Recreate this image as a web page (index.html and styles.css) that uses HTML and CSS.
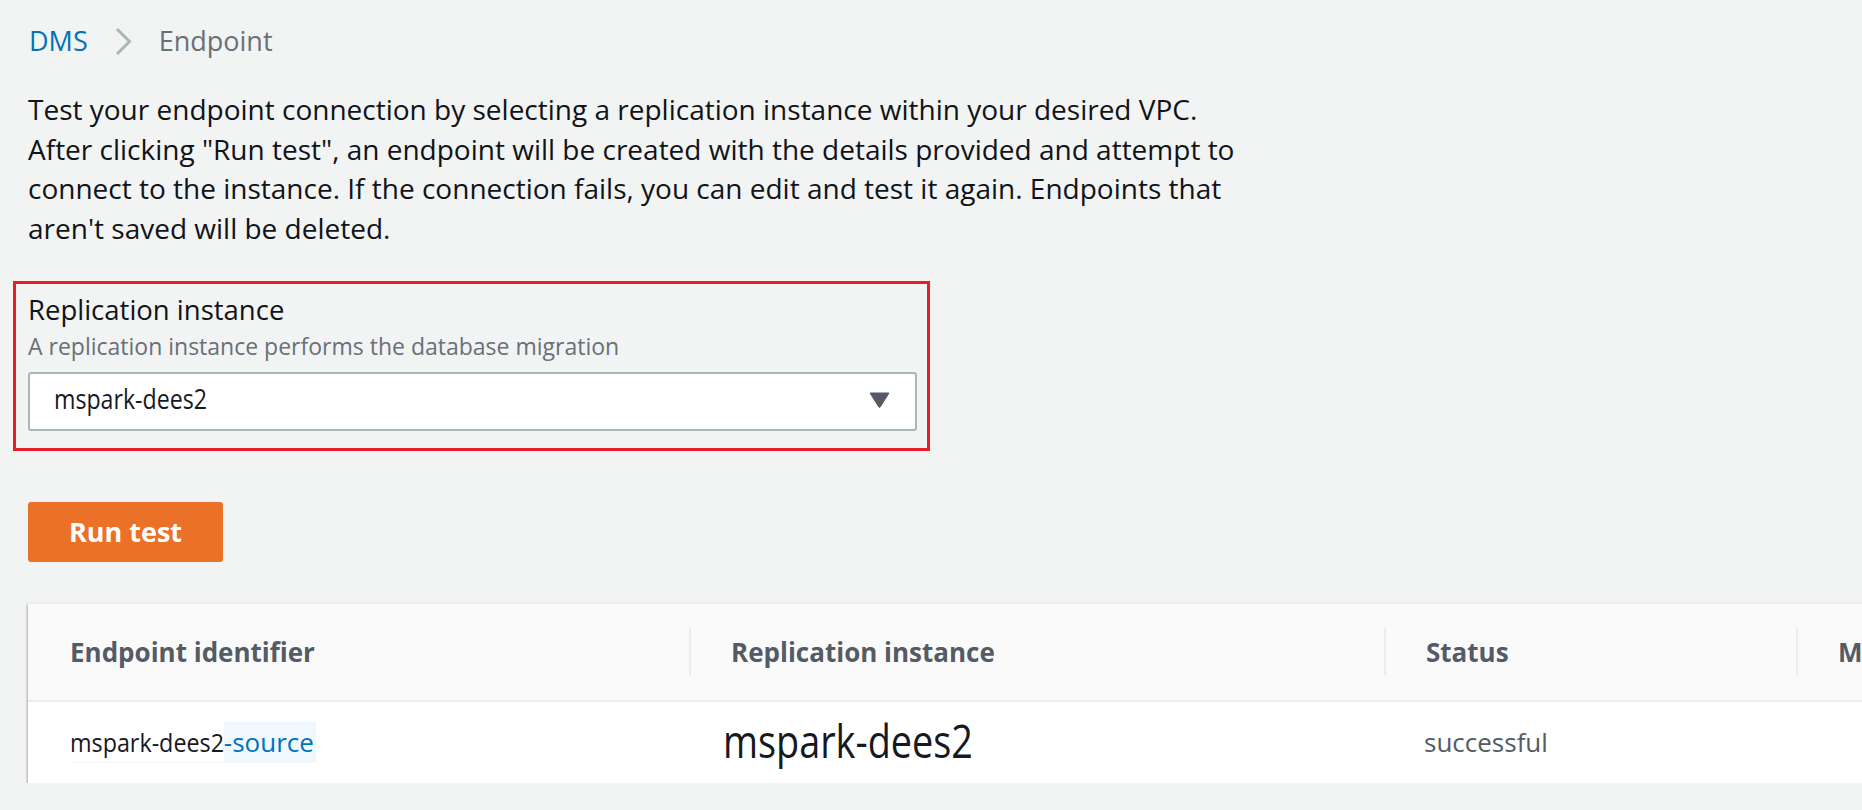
FILE: index.html
```html
<!DOCTYPE html>
<html lang="en">
<head>
<meta charset="utf-8">
<title>DMS - Endpoint</title>
<link rel="stylesheet" href="styles.css">
</head>
<body>
<div class="page">
  <nav class="crumbs">
    <a class="crumb-link" href="#">DMS</a>
    <svg class="chev" width="17" height="29" viewBox="0 0 17 29"><polyline points="2,2 14.5,14.5 2,27" fill="none" stroke="#aab7b8" stroke-width="3"/></svg>
    <span class="crumb-current">Endpoint</span>
  </nav>

  <p class="intro">Test your endpoint connection by selecting a replication instance within your desired VPC.<br>After clicking "Run test", an endpoint will be created with the details provided and attempt to<br>connect to the instance. If the connection fails, you can edit and test it again. Endpoints that<br>aren't saved will be deleted.</p>

  <div class="focus-box">
    <div class="field-label">Replication instance</div>
    <div class="field-desc">A replication instance performs the database migration</div>
    <div class="select">
      <span class="narrow sel-val">mspark-dees2</span>
      <svg class="caret" width="21" height="16" viewBox="0 0 21 16"><path d="M1 1 H20 L11.2 15 Q10.5 16 9.8 15 Z" fill="#545b64" stroke="#545b64" stroke-width="1" stroke-linejoin="round"/></svg>
    </div>
  </div>

  <button class="btn-primary">Run test</button>

  <div class="table">
    <div class="thead">
      <div class="th th-first"><span class="th-label">Endpoint identifier</span></div>
      <div class="th"><span class="th-label">Replication instance</span></div>
      <div class="th"><span class="th-label">Status</span></div>
      <div class="th"><span class="th-label">Message</span></div>
    </div>
    <div class="trow">
      <div class="td td-first"><span class="narrow id-val">mspark-dees2</span><span class="id-suffix">-source</span></div>
      <div class="td td-big"><span class="narrow big-val">mspark-dees2</span></div>
      <div class="td td-status">successful</div>
      <div class="td"></div>
    </div>
  </div>
</div>
</body>
</html>
```
FILE: styles.css
```css
html, body {
  margin: 0;
  padding: 0;
  overflow: hidden;
  background: #f2f3f3;
}

body {
  font-family: "Open Sans", "Noto Sans", sans-serif;
  color: #16191f;
}

.page {
  padding: 21px 0 0 28px;
}

/* breadcrumb */
.crumbs {
  display: flex;
  align-items: center;
  gap: 27px;
  height: 40px;
  font-size: 27px;
  line-height: 40px;
}

.crumb-link {
  color: #0073bb;
  text-decoration: none;
  padding-left: 1px;
}

.crumb-current {
  color: #687078;
}

.chev {
  display: block;
}

/* intro */
.intro {
  margin: 29px 0 0 0;
  font-size: 28px;
  line-height: 39.6px;
  white-space: nowrap;
  color: #101318;
}

/* highlighted form field */
.focus-box {
  box-sizing: border-box;
  width: 917px;
  margin: 33px 0 0 -15px;
  padding: 7px 10px 17px 12px;
  border: 3px solid #e61e25;
}

.field-label {
  font-size: 27.5px;
  line-height: 38.5px;
  color: #101318;
}

.field-desc {
  font-size: 23px;
  line-height: 32px;
  color: #687078;
}

.select {
  box-sizing: border-box;
  display: flex;
  align-items: center;
  justify-content: space-between;
  height: 59px;
  margin-top: 10px;
  padding: 0 25px 0 24px;
  background: #fff;
  border: 2px solid #aab7b8;
  border-radius: 3px;
}

.narrow {
  display: inline-block;
  transform-origin: left center;
  white-space: nowrap;
}

.sel-val {
  font-size: 27px;
  line-height: 36px;
  margin-top: -5px;
  color: #16191f;
  transform: scaleX(0.857);
}

.caret {
  display: block;
  margin-top: -2px;
}

/* primary button */
.btn-primary {
  display: block;
  box-sizing: border-box;
  width: 195px;
  height: 60px;
  margin-top: 51px;
  padding: 0;
  border: none;
  border-radius: 3px;
  background: #eb7128;
  color: #fff;
  font-family: inherit;
  font-size: 27px;
  font-weight: 700;
}

/* table */
.table {
  margin-top: 41px;
  width: 2300px;
  background: #fff;
  border-top: 1px solid #e9ebed;
  box-shadow: 0 1px 0 #b4bcbf, 0 3px 3px rgba(0, 28, 36, 0.2), -1px 1px 2px rgba(0, 28, 36, 0.22);
}

.thead,
.trow {
  display: grid;
  grid-template-columns: 661px 695px 412px 532px;
}

.thead {
  height: 96px;
  background: #fafafa;
  border-bottom: 2px solid #e9ebed;
}

.th {
  display: flex;
  align-items: center;
}

.th-label {
  display: flex;
  align-items: center;
  height: 47px;
  padding-left: 40px;
  border-left: 2px solid #eaeded;
  font-size: 26px;
  font-weight: 700;
  color: #545b64;
  white-space: nowrap;
}

.th-first .th-label {
  padding-left: 42px;
  border-left: none;
}

.trow {
  height: 81px;
}

.td {
  display: flex;
  align-items: center;
  padding-left: 42px;
  font-size: 26px;
  color: #545b64;
  white-space: nowrap;
}

.td-first {
  padding-left: 42px;
}

.id-val {
  color: #16191f;
  transform: scaleX(0.896);
  margin-right: -18px;
  padding-top: 1px;
  line-height: 40px;
  border-bottom: 1px solid #f0f6fa;
}

.id-suffix {
  color: #0073bb;
  background: #f0f8fe;
  line-height: 40px;
  padding: 0 2px 1px 0;
}

.td-big {
  padding-left: 34px;
}

.big-val {
  font-size: 46px;
  line-height: 56px;
  margin-top: -4px;
  color: #16191f;
  transform: scaleX(0.822);
}

.td-status {
  padding-left: 40px;
}
```
